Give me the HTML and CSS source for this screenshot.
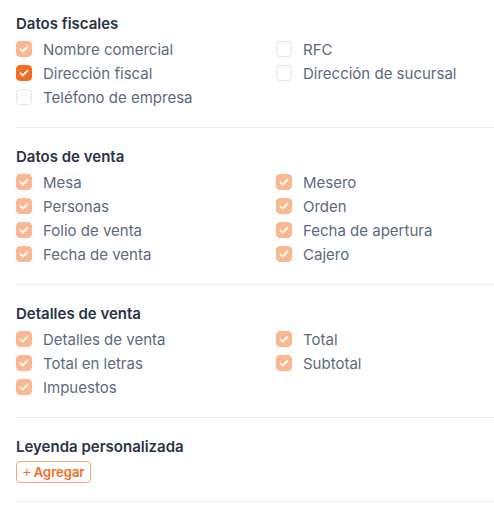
FILE: index.html
```html
<!DOCTYPE html>
<html lang="es">
<head>
<meta charset="utf-8">
<link rel="stylesheet" href="styles.css">
</head>
<body>
<div class="panel">
  <section class="section">
    <h3 class="title">Datos fiscales</h3>
    <div class="grid">
      <label class="opt"><span class="box on-soft"><svg viewBox="0 0 16 16"><path d="M4.5 8.3l2.3 2.2 4.7-4.8"/></svg></span>Nombre comercial</label>
      <label class="opt"><span class="box"></span>RFC</label>
      <label class="opt"><span class="box on"><svg viewBox="0 0 16 16"><path d="M4.5 8.3l2.3 2.2 4.7-4.8"/></svg></span>Dirección fiscal</label>
      <label class="opt"><span class="box"></span>Dirección de sucursal</label>
      <label class="opt"><span class="box"></span>Teléfono de empresa</label>
    </div>
  </section>
  <section class="section">
    <h3 class="title">Datos de venta</h3>
    <div class="grid">
      <label class="opt"><span class="box on-soft"><svg viewBox="0 0 16 16"><path d="M4.5 8.3l2.3 2.2 4.7-4.8"/></svg></span>Mesa</label>
      <label class="opt"><span class="box on-soft"><svg viewBox="0 0 16 16"><path d="M4.5 8.3l2.3 2.2 4.7-4.8"/></svg></span>Mesero</label>
      <label class="opt"><span class="box on-soft"><svg viewBox="0 0 16 16"><path d="M4.5 8.3l2.3 2.2 4.7-4.8"/></svg></span>Personas</label>
      <label class="opt"><span class="box on-soft"><svg viewBox="0 0 16 16"><path d="M4.5 8.3l2.3 2.2 4.7-4.8"/></svg></span>Orden</label>
      <label class="opt"><span class="box on-soft"><svg viewBox="0 0 16 16"><path d="M4.5 8.3l2.3 2.2 4.7-4.8"/></svg></span>Folio de venta</label>
      <label class="opt"><span class="box on-soft"><svg viewBox="0 0 16 16"><path d="M4.5 8.3l2.3 2.2 4.7-4.8"/></svg></span>Fecha de apertura</label>
      <label class="opt"><span class="box on-soft"><svg viewBox="0 0 16 16"><path d="M4.5 8.3l2.3 2.2 4.7-4.8"/></svg></span>Fecha de venta</label>
      <label class="opt"><span class="box on-soft"><svg viewBox="0 0 16 16"><path d="M4.5 8.3l2.3 2.2 4.7-4.8"/></svg></span>Cajero</label>
    </div>
  </section>
  <section class="section">
    <h3 class="title">Detalles de venta</h3>
    <div class="grid">
      <label class="opt"><span class="box on-soft"><svg viewBox="0 0 16 16"><path d="M4.5 8.3l2.3 2.2 4.7-4.8"/></svg></span>Detalles de venta</label>
      <label class="opt"><span class="box on-soft"><svg viewBox="0 0 16 16"><path d="M4.5 8.3l2.3 2.2 4.7-4.8"/></svg></span>Total</label>
      <label class="opt"><span class="box on-soft"><svg viewBox="0 0 16 16"><path d="M4.5 8.3l2.3 2.2 4.7-4.8"/></svg></span>Total en letras</label>
      <label class="opt"><span class="box on-soft"><svg viewBox="0 0 16 16"><path d="M4.5 8.3l2.3 2.2 4.7-4.8"/></svg></span>Subtotal</label>
      <label class="opt"><span class="box on-soft"><svg viewBox="0 0 16 16"><path d="M4.5 8.3l2.3 2.2 4.7-4.8"/></svg></span>Impuestos</label>
    </div>
  </section>
  <section class="section">
    <h3 class="title">Leyenda personalizada</h3>
    <button class="add" type="button"><span class="plus">+</span>Agregar</button>
  </section>
</div>
</body>
</html>
```
FILE: styles.css
```css
* { box-sizing: border-box; }
html, body { margin: 0; padding: 0; background: #ffffff; }
body {
  font-family: Inter, "Noto Sans", "Liberation Sans", sans-serif;
  color: #5d6a80;
}
.panel {
  padding: 0 0 0 16px;
}
.section {
  padding: 19px 0 18px;
  border-bottom: 1px solid #e8ebef;
}
.section:first-child { padding-top: 14px; }
.title {
  margin: 0 0 3px;
  font-size: 15px;
  line-height: 20px;
  font-weight: 600;
  color: #2a3447;
}
.grid {
  display: grid;
  grid-template-columns: 260px 1fr;
}
.opt {
  display: flex;
  align-items: center;
  gap: 11px;
  height: 24px;
  font-size: 15px;
  color: #5c6a80;
}
.box {
  width: 16px;
  height: 16px;
  border-radius: 4px;
  border: 1px solid #e3e6eb;
  background: #fff;
  flex: none;
  display: flex;
}
.box svg { width: 16px; height: 16px; margin: -1px; }
.box path {
  fill: none;
  stroke: #fff;
  stroke-width: 1.8;
  stroke-linecap: round;
  stroke-linejoin: round;
}
.box.on-soft { background: #f9b892; border-color: #f9b892; }
.box.on { background: #f26d21; border-color: #f26d21; }
.add {
  margin-top: 1px;
  display: inline-flex;
  align-items: center;
  gap: 2px;
  height: 22px;
  padding: 0 5px 0 5px;
  border: 1px solid #f6a57a;
  border-radius: 4px;
  background: #fff;
  color: #f26d21;
  font-family: Inter, "Noto Sans", "Liberation Sans", sans-serif;
  font-size: 13px;
  font-weight: 600;
  cursor: pointer;
}
.plus { font-weight: 300; font-size: 15px; line-height: 1; margin-top: -1px; }
```
